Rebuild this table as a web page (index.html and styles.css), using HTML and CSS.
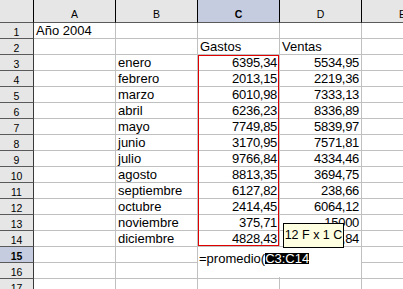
FILE: index.html
```html
<!DOCTYPE html>
<html lang="es">
<head>
<meta charset="utf-8">
<title>Hoja de cálculo</title>
<link rel="stylesheet" href="styles.css">
</head>
<body>
<div class="sheet">
  <div class="grid">
    <div class="h corner"></div><div class="h">A</div><div class="h">B</div><div class="h sel">C</div><div class="h">D</div><div class="h">E</div>

    <div class="r">1</div><div class="c">Año 2004</div><div class="c"></div><div class="c"></div><div class="c"></div><div class="c"></div>
    <div class="r">2</div><div class="c"></div><div class="c"></div><div class="c">Gastos</div><div class="c">Ventas</div><div class="c"></div>
    <div class="r">3</div><div class="c"></div><div class="c">enero</div><div class="c n">6395,34</div><div class="c n">5534,95</div><div class="c"></div>
    <div class="r">4</div><div class="c"></div><div class="c">febrero</div><div class="c n">2013,15</div><div class="c n">2219,36</div><div class="c"></div>
    <div class="r">5</div><div class="c"></div><div class="c">marzo</div><div class="c n">6010,98</div><div class="c n">7333,13</div><div class="c"></div>
    <div class="r">6</div><div class="c"></div><div class="c">abril</div><div class="c n">6236,23</div><div class="c n">8336,89</div><div class="c"></div>
    <div class="r">7</div><div class="c"></div><div class="c">mayo</div><div class="c n">7749,85</div><div class="c n">5839,97</div><div class="c"></div>
    <div class="r">8</div><div class="c"></div><div class="c">junio</div><div class="c n">3170,95</div><div class="c n">7571,81</div><div class="c"></div>
    <div class="r">9</div><div class="c"></div><div class="c">julio</div><div class="c n">9766,84</div><div class="c n">4334,46</div><div class="c"></div>
    <div class="r">10</div><div class="c"></div><div class="c">agosto</div><div class="c n">8813,35</div><div class="c n">3694,75</div><div class="c"></div>
    <div class="r">11</div><div class="c"></div><div class="c">septiembre</div><div class="c n">6127,82</div><div class="c n">238,66</div><div class="c"></div>
    <div class="r">12</div><div class="c"></div><div class="c">octubre</div><div class="c n">2414,45</div><div class="c n">6064,12</div><div class="c"></div>
    <div class="r">13</div><div class="c"></div><div class="c">noviembre</div><div class="c n">375,71</div><div class="c n">15000</div><div class="c"></div>
    <div class="r">14</div><div class="c"></div><div class="c">diciembre</div><div class="c n">4828,43</div><div class="c n">5172,84</div><div class="c"></div>
    <div class="r sel">15</div><div class="c"></div><div class="c"></div><div class="c"></div><div class="c"></div><div class="c"></div>
    <div class="r">16</div><div class="c"></div><div class="c"></div><div class="c"></div><div class="c"></div><div class="c"></div>
    <div class="r">17</div><div class="c"></div><div class="c"></div><div class="c"></div><div class="c"></div><div class="c"></div>
  </div>

  <div class="range"></div>
  <div class="editor">=promedio(<span class="ref">C3:C14</span></div>
  <div class="tip">12 F x 1 C</div>
</div>
</body>
</html>
```

FILE: styles.css
```css
html, body {
  margin: 0;
  padding: 0;
  background: #ffffff;
}

body {
  width: 403px;
  height: 289px;
  overflow: hidden;
  font-family: "Liberation Sans", Arial, sans-serif;
  color: #000;
}

.sheet {
  position: relative;
  width: 403px;
  height: 289px;
  overflow: hidden;
}

.grid {
  display: grid;
  grid-template-columns: 34px repeat(5, 82px);
  grid-template-rows: 23px;
  grid-auto-rows: 16px;
}

.grid > div {
  box-sizing: border-box;
  overflow: hidden;
  white-space: nowrap;
}

.h {
  background: #e6e6e6;
  border-right: 1px solid #000;
  border-bottom: 1px solid #5a5a5a;
  font-size: 10.5px;
  line-height: 14px;
  padding-top: 7px;
  text-align: center;
}

.h.sel {
  background: #c6cce0;
  font-weight: bold;
}

.r {
  background: #e6e6e6;
  border-right: 1px solid #3a3a3a;
  border-bottom: 1px solid #5a5a5a;
  font-size: 10.5px;
  line-height: 13px;
  padding-top: 3px;
  text-align: center;
}

.r.sel {
  background: #c6cce0;
  font-weight: bold;
}

.c {
  border-right: 1px solid #c0c0c0;
  border-bottom: 1px solid #c0c0c0;
  font-size: 13px;
  line-height: 15px;
  padding: 0 2px;
}

.c.n {
  text-align: right;
  padding-right: 2px;
  letter-spacing: -0.3px;
}

.range {
  position: absolute;
  left: 198px;
  top: 55px;
  width: 81px;
  height: 191px;
  box-sizing: border-box;
  border: 1px solid #e00000;
}

.editor {
  position: absolute;
  left: 198px;
  top: 247px;
  width: 163px;
  height: 30px;
  box-sizing: border-box;
  background: #ffffff;
  padding: 6px 0 0 1px;
  font-size: 13px;
  line-height: 11px;
  white-space: nowrap;
}

.ref {
  display: inline-block;
  height: 11px;
  line-height: 11px;
  background: #000;
  color: #fff;
  vertical-align: top;
}

.tip {
  position: absolute;
  left: 283px;
  top: 223px;
  width: 61px;
  height: 25px;
  box-sizing: border-box;
  background: #ffffe1;
  border: 1px solid #000;
  font-size: 12.5px;
  line-height: 23px;
  text-align: center;
  white-space: nowrap;
}
```
